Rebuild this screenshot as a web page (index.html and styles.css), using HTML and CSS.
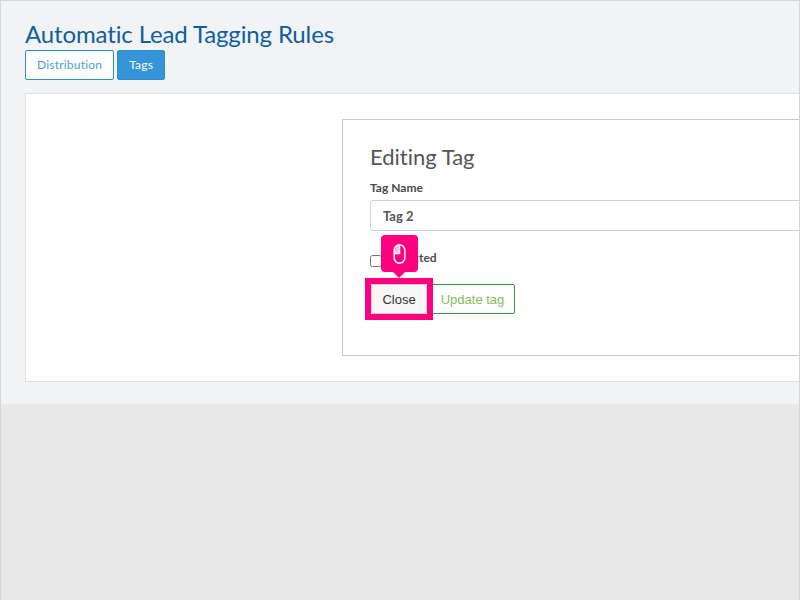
FILE: index.html
```html
<!DOCTYPE html>
<html lang="en">
<head>
  <meta charset="UTF-8" />
  <meta name="viewport" content="width=device-width, initial-scale=1.0" />
  <title>Automatic Lead Tagging Rules</title>
  <link rel="stylesheet" href="styles.css">
</head>

<body>
  <div class="frame">
    <main class="content">
      <h1>Automatic Lead Tagging Rules</h1>
      <div class="tabs">
        <a href="#distribution" class="tab">Distribution</a>
        <a href="#tags" class="tab active">Tags</a>
      </div>

      <section class="panel">
        <form class="tag-form">
          <h2>Editing Tag</h2>
          <label class="field-label" for="tag-name">Tag Name</label>
          <input id="tag-name" type="text" value="Tag 2" />

          <label class="check-row">
            <input type="checkbox" />
            <span>Protected</span>
          </label>

          <div class="actions">
            <div class="close-wrap">
              <button type="button" class="btn btn-close">Close</button>
              <div class="highlight"></div>
              <div class="hint">
                <svg width="13" height="20" viewBox="0 0 13 20" fill="none" stroke="#fff" stroke-width="1.5">
                  <path d="M6.500 1.500a4.500 4.500 0 0 0-4.500 4.500v3h4.500z" fill="#ffb3d9" stroke="none" />
                  <rect x="1.200" y="0.800" width="10.600" height="18.400" rx="5.300" />
                  <path d="M6.500 1v8.500H1.500" />
                </svg>
              </div>
            </div>
            <button type="button" class="btn btn-update">Update tag</button>
          </div>
        </form>
      </section>
    </main>
  </div>
</body>
</html>
```

FILE: styles.css
```css
html, body {
  margin: 0;
  height: 100%;
}

body {
  font-family: 'Lato', sans-serif;
  font-variant-ligatures: none;
  overflow: hidden;
}

.frame {
  box-sizing: border-box;
  height: 600px;
  background: #e8e8e8;
  border: 1px solid #d4d6d9;
  border-bottom: none;
  overflow: hidden;
}

.content {
  box-sizing: border-box;
  height: 403px;
  padding: 18px 0 0 24px;
  background: #f2f3f5;
}

h1 {
  margin: 0;
  font-size: 24px;
  line-height: 30px;
  font-weight: 400;
  letter-spacing: -0.13px;
  color: #0f5f9e;
}

.tabs {
  display: flex;
  gap: 3px;
  margin-top: 1px;
}

.tab {
  box-sizing: border-box;
  height: 30px;
  padding: 0 11px;
  line-height: 28px;
  font-size: 12px;
  letter-spacing: 0.2px;
  text-decoration: none;
  color: #4a9fdc;
  background: #fff;
  border: 1px solid #2f8ccf;
  border-radius: 2px;
}

.tab.active {
  color: #fff;
  background: #3695d8;
}

.panel {
  box-sizing: border-box;
  height: 289px;
  margin-top: 13px;
  padding: 25px 0 0 316px;
  background: #fff;
  border: 1px solid #e0e1e3;
  border-right: none;
}

.tag-form {
  box-sizing: border-box;
  width: 560px;
  height: 237px;
  padding: 23px 27px;
  border: 1px solid #c9c9c9;
}

h2 {
  margin: 0;
  font-size: 22px;
  line-height: 28px;
  font-weight: 400;
  color: #555;
}

.field-label {
  display: block;
  margin-top: 9px;
  font-size: 12px;
  line-height: 15px;
  font-weight: 700;
  color: #4a4a4a;
}

#tag-name {
  display: block;
  box-sizing: border-box;
  width: 100%;
  height: 31px;
  margin-top: 5px;
  padding: 0 12px;
  font-family: inherit;
  font-size: 13px;
  font-weight: 700;
  color: #555;
  border: 1px solid #d0d0d0;
  border-radius: 3px;
}

.check-row {
  display: flex;
  align-items: flex-start;
  gap: 2px;
  margin-top: 19px;
  font-size: 12px;
  line-height: 15px;
  font-weight: 700;
  color: #4a4a4a;
}

.check-row input {
  width: 12px;
  height: 12px;
  margin: 5px 0 0;
}

.actions {
  display: flex;
  gap: 3px;
  margin-top: 17px;
  padding-left: 1px;
}

.close-wrap {
  position: relative;
}

.btn {
  box-sizing: border-box;
  height: 30px;
  padding: 0;
  font-family: 'Liberation Sans', sans-serif;
  font-size: 13px;
  white-space: nowrap;
  border-radius: 2px;
  background: #fff;
}

.btn-close {
  display: block;
  width: 56px;
  color: #333;
  background: #f7f7f7;
  border: 1px solid #ccc;
}

.btn-update {
  width: 85px;
  color: #84bd5a;
  border: 1px solid #3f9a3f;
}

.highlight {
  position: absolute;
  left: -6px;
  top: -6px;
  width: 68px;
  height: 42px;
  box-sizing: border-box;
  border: 6px solid #ff007f;
}

.hint {
  position: absolute;
  left: 10px;
  top: -49px;
  width: 37px;
  height: 37px;
  display: flex;
  align-items: center;
  justify-content: center;
  background: #ff007f;
  border-radius: 4px;
}

.hint::after {
  content: '';
  position: absolute;
  left: 12px;
  bottom: -6px;
  border-left: 6px solid transparent;
  border-right: 6px solid transparent;
  border-top: 6px solid #ff007f;
}
```
